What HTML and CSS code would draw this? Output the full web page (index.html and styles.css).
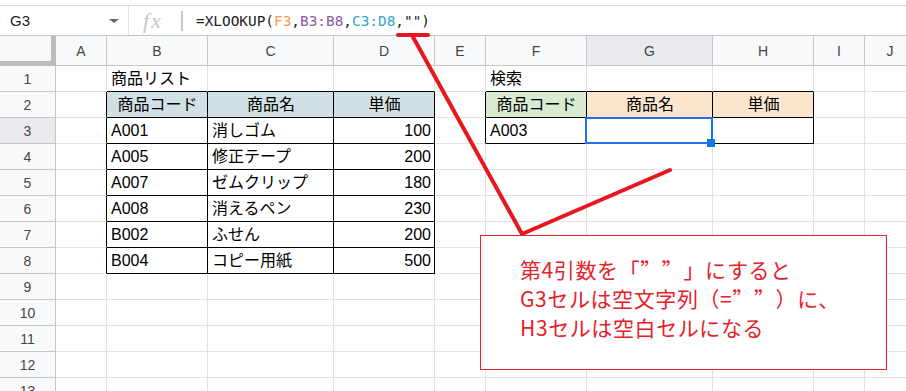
FILE: index.html
```html
<!DOCTYPE html>
<html lang="ja">
<head>
    <meta charset="UTF-8">
    <meta name="viewport" content="width=device-width, initial-scale=1.0">
    <title>XLOOKUP 第4引数</title>
    <link rel="stylesheet" href="styles.css">
</head>
<body>
    <div class="top-strip"></div>

    <!-- 数式バー -->
    <div class="formula-bar">
        <div class="name-box"><span>G3</span><span class="caret"></span></div>
        <div class="fx">fx</div>
        <div class="fx-sep"></div>
        <div class="formula">=XLOOKUP(<span class="ref-f">F3</span>,<span class="ref-b">B3:B8</span>,<span class="ref-c">C3:D8</span>,"")</div>
    </div>

    <!-- シート -->
    <table class="sheet">
        <colgroup>
            <col class="w-head"><col class="w-s"><col class="w-m"><col class="w-l"><col class="w-m"><col class="w-s">
            <col class="w-m"><col class="w-l"><col class="w-m"><col class="w-s"><col class="w-s">
        </colgroup>
        <tr class="col-head">
            <th class="corner"></th><th>A</th><th>B</th><th>C</th><th>D</th><th>E</th>
            <th>F</th><th class="active">G</th><th>H</th><th>I</th><th>J</th>
        </tr>
        <tr>
            <th class="row-head">1</th><td></td><td class="bb">商品リスト</td><td class="bb"></td><td class="bb"></td><td></td>
            <td class="bb">検索</td><td class="bb"></td><td class="bb"></td><td></td><td></td>
        </tr>
        <tr>
            <th class="row-head">2</th><td class="br"></td>
            <td class="box c hd-blue">商品コード</td><td class="box c hd-blue">商品名</td><td class="box c hd-blue">単価</td>
            <td class="br"></td>
            <td class="box c hd-green">商品コード</td><td class="box c hd-orange">商品名</td><td class="box c hd-orange">単価</td>
            <td></td><td></td>
        </tr>
        <tr>
            <th class="row-head active">3</th><td class="br"></td>
            <td class="box">A001</td><td class="box">消しゴム</td><td class="box num">100</td>
            <td class="br"></td>
            <td class="box">A003</td><td class="box sel"></td><td class="box"></td>
            <td></td><td></td>
        </tr>
        <tr>
            <th class="row-head">4</th><td class="br"></td>
            <td class="box">A005</td><td class="box">修正テープ</td><td class="box num">200</td>
            <td></td><td></td><td></td><td></td><td></td><td></td>
        </tr>
        <tr>
            <th class="row-head">5</th><td class="br"></td>
            <td class="box">A007</td><td class="box">ゼムクリップ</td><td class="box num">180</td>
            <td></td><td></td><td></td><td></td><td></td><td></td>
        </tr>
        <tr>
            <th class="row-head">6</th><td class="br"></td>
            <td class="box">A008</td><td class="box">消えるペン</td><td class="box num">230</td>
            <td></td><td></td><td></td><td></td><td></td><td></td>
        </tr>
        <tr>
            <th class="row-head">7</th><td class="br"></td>
            <td class="box">B002</td><td class="box">ふせん</td><td class="box num">200</td>
            <td></td><td></td><td></td><td></td><td></td><td></td>
        </tr>
        <tr>
            <th class="row-head">8</th><td class="br"></td>
            <td class="box">B004</td><td class="box">コピー用紙</td><td class="box num">500</td>
            <td></td><td></td><td></td><td></td><td></td><td></td>
        </tr>
        <tr><th class="row-head">9</th><td></td><td></td><td></td><td></td><td></td><td></td><td></td><td></td><td></td><td></td></tr>
        <tr><th class="row-head">10</th><td></td><td></td><td></td><td></td><td></td><td></td><td></td><td></td><td></td><td></td></tr>
        <tr><th class="row-head">11</th><td></td><td></td><td></td><td></td><td></td><td></td><td></td><td></td><td></td><td></td></tr>
        <tr><th class="row-head">12</th><td></td><td></td><td></td><td></td><td></td><td></td><td></td><td></td><td></td><td></td></tr>
        <tr><th class="row-head">13</th><td></td><td></td><td></td><td></td><td></td><td></td><td></td><td></td><td></td><td></td></tr>
    </table>

    <!-- 注釈の線 -->
    <svg class="marks" viewBox="0 0 906 391">
        <g stroke="#e8161e" stroke-width="4" stroke-linecap="round" stroke-linejoin="round" fill="none">
            <line x1="398" y1="35" x2="428" y2="35"/>
            <polyline points="413,37 522,234 670,170"/>
        </g>
    </svg>

    <!-- 吹き出し -->
    <div class="callout">
        <div>第4引数を「<span class="fw">””</span>」にすると</div>
        <div>G3セルは空文字列（=<span class="fw">””</span>）に、</div>
        <div>H3セルは空白セルになる</div>
    </div>
</body>
</html>
```

FILE: styles.css
```css
/* 全体 */
* {
    box-sizing: border-box;
}

html, body {
    margin: 0;
    overflow: hidden;
    background-color: #ffffff;
}

body {
    position: relative;
    width: 906px;
    height: 391px;
    font-family: "Liberation Sans", "Noto Sans CJK JP", sans-serif;
}

.top-strip {
    height: 6px;
    border-bottom: 1px solid #dadce0;
}

/* 数式バー */
.formula-bar {
    display: flex;
    align-items: center;
    height: 30px;
    border-bottom: 1px solid #c4c7c5;
}

.name-box {
    display: flex;
    align-items: center;
    justify-content: space-between;
    width: 129px;
    height: 100%;
    padding: 0 9px 0 10px;
    border-right: 1px solid #e3e3e3;
    font-size: 15px;
    color: #202124;
}

.caret {
    width: 0;
    height: 0;
    border-left: 5px solid transparent;
    border-right: 5px solid transparent;
    border-top: 4px solid #5f6368;
}

.fx {
    margin-left: 14px;
    width: 24px;
    font-family: "Liberation Serif", serif;
    font-style: italic;
    font-size: 22px;
    letter-spacing: 2px;
    color: #c6c6c6;
}

.fx-sep {
    margin-left: 14px;
    width: 2px;
    height: 20px;
    background-color: #c8c8c8;
}

.formula {
    margin-left: 13px;
    font-family: "DejaVu Sans Mono", monospace;
    font-size: 14.4px;
    color: #202124;
}

.ref-f { color: #f29c4b; }
.ref-b { color: #8a5aa5; }
.ref-c { color: #35a3d6; }

/* シート */
.sheet {
    border-collapse: separate;
    border-spacing: 0;
    table-layout: fixed;
    width: 916px;
}

.w-head { width: 56px; }
.w-s { width: 51px; }
.w-m { width: 101px; }
.w-l { width: 126px; }

.sheet tr {
    height: 26px;
}

.sheet tr.col-head {
    height: 30px;
}

.sheet th {
    padding: 0;
    font-size: 14px;
    font-weight: normal;
    color: #444746;
    background-color: #f8f9fa;
    border-right: 1px solid #c4c7c5;
    border-bottom: 1px solid #c4c7c5;
    vertical-align: middle;
}

.sheet th.corner {
    border-right: 5px solid #bdbdbd;
    border-bottom: 5px solid #bdbdbd;
}

.sheet th.active {
    background-color: #e8eaed;
}

.row-head {
    color: #5f6368;
}

.sheet td {
    padding: 0 3px 3px 4px;
    font-size: 16px;
    line-height: 18px;
    color: #000000;
    white-space: nowrap;
    border-right: 1px solid #e1e1e1;
    border-bottom: 1px solid #e1e1e1;
    vertical-align: bottom;
}

.sheet td.bb { border-bottom-color: #000000; }
.sheet td.br { border-right-color: #000000; }
.sheet td.box {
    border-right-color: #000000;
    border-bottom-color: #000000;
}

.c { text-align: center; }
.num { text-align: right; }

.hd-blue { background-color: #d0e0e3; }
.hd-green { background-color: #d9ead3; }
.hd-orange { background-color: #fce5cd; }

/* 選択セル */
.sel {
    position: relative;
}

.sel::before {
    content: "";
    position: absolute;
    top: -1px;
    left: -2px;
    right: -1px;
    bottom: -1px;
    border: 2px solid #1a73e8;
}

.sel::after {
    content: "";
    position: absolute;
    right: -3px;
    bottom: -4px;
    width: 8px;
    height: 8px;
    background-color: #1a73e8;
}

/* 注釈 */
.marks {
    position: absolute;
    left: 0;
    top: 0;
    width: 906px;
    height: 391px;
    pointer-events: none;
}

.callout {
    position: absolute;
    left: 480px;
    top: 235px;
    width: 407px;
    height: 135px;
    padding: 19px 0 0 39px;
    border: 1px solid #e5252b;
    background-color: #ffffff;
    font-family: "Noto Sans CJK JP", sans-serif;
    font-size: 21px;
    line-height: 29px;
    letter-spacing: 0.6px;
    color: #e62129;
}

.fw {
    font-feature-settings: "fwid";
}
```
